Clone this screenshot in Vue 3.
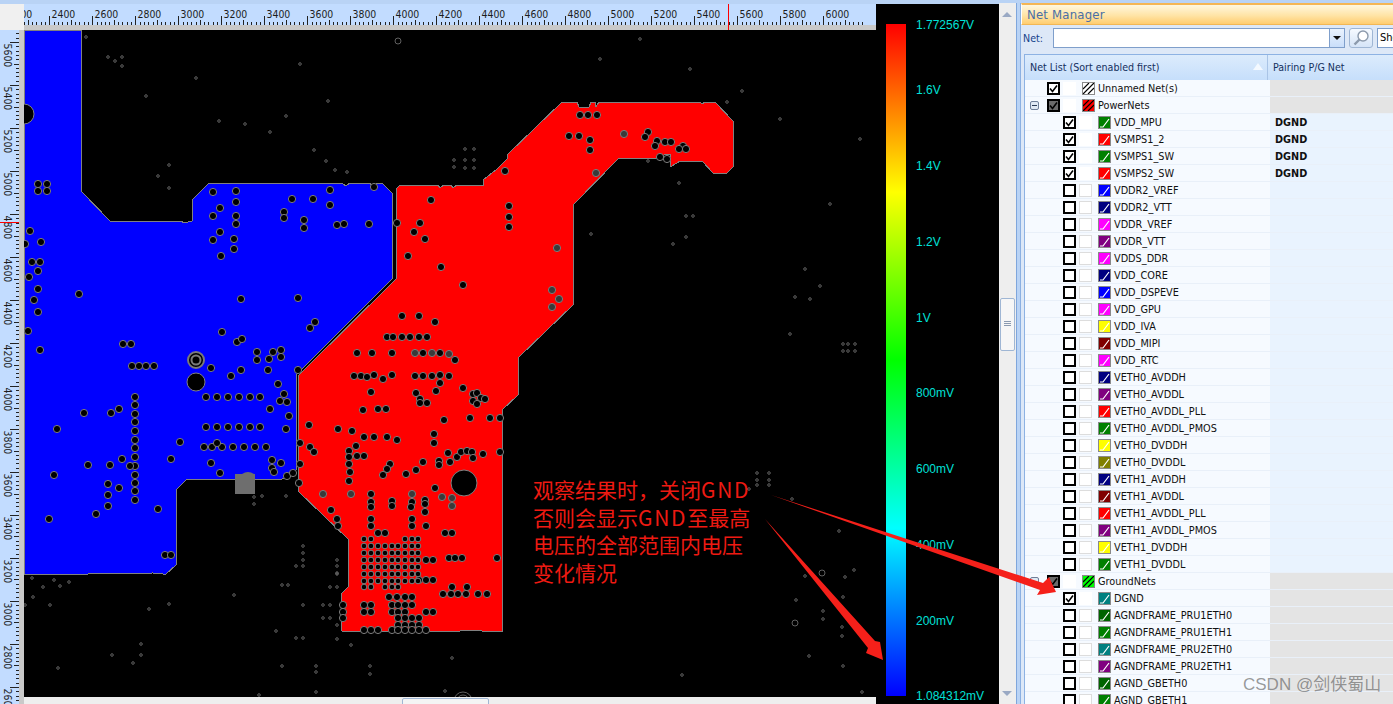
<script setup>
const topTicks = []
for (let i = 0; i < 200; i++) {
  const x = 6.3 + i * 4.3
  if (x > 876) break
  topTicks.push({ x: Math.round(x) + 0.5, h: i % 10 === 0 ? 9 : i % 5 === 0 ? 5 : 3 })
}
const topLabels = []
for (let i = 0; i < 20; i++) topLabels.push({ x: 8.5 + i * 43, text: 2200 + i * 200 })

const leftTicks = []
for (let i = 0; i < 170; i++) {
  const y = 42 - 4.3 * 9 + i * 4.3
  if (y > 704) break
  leftTicks.push({ y: Math.round(y) + 0.5, h: i % 10 === 9 ? 9 : i % 5 === 4 ? 5 : 3 })
}
const leftLabels = []
for (let i = 0; i < 16; i++) leftLabels.push({ y: 43.5 + i * 43, text: 5600 - i * 200 })

const scale = [
  { y: 24, t: '1.772567V' }, { y: 89, t: '1.6V' }, { y: 165, t: '1.4V' }, { y: 241, t: '1.2V' },
  { y: 317, t: '1V' }, { y: 392, t: '800mV' }, { y: 468, t: '600mV' }, { y: 544, t: '400mV' },
  { y: 620, t: '200mV' }, { y: 695, t: '1.084312mV' }
]

const bluePoly = '24,31 81,31 81,192 110,222 181,222 184,224 188,223 192,222 192,201 209,184 236,184 246,184 320,184 342,184 346,187 350,184 370,184 373,188 377,184 382,184 392,194 392,280 297,375 296,473 290,478 282,480 187,480 176,491 176,566 165,576 161,574 157,575 153,574 24,576'
const redPoly = '400,186 438,186 440,189 444,186 451,186 453,189 457,186 483,186 483,181 497,170 507,160 508,155 562,103 577,103 579,108 589,108 591,103 595,103 596,108 599,103 700,103 702,105 705,103 715,103 733,122 733,168 727,174 713,174 702,162 680,162 672,167 670,167 670,155 665,155 660,159 619,159 573,206 573,306 518,359 518,396 502,411 502,632 482,632 480,631 460,632 440,633 341,632 341,595 348,588 348,540 298,492 298,377 396,280 396,190'

const blueHoles = [
  [38,185],[47,185],[38,192],[47,192],[30,232],[41,243],[25,245],[32,263],[40,263],[38,272],[29,278],[38,290],[34,301],[38,313],[28,332],[40,351],[79,295],[123,345],[131,345],[222,333],[237,343],[242,340],[257,353],[257,361],[273,353],[269,360],[281,351],[281,358],[310,329],[315,323],[298,299],[241,300],[221,257],[234,250],[234,240],[213,241],[220,233],[236,225],[236,217],[213,217],[220,209],[236,203],[213,193],[236,192],[292,200],[313,200],[284,213],[284,219],[304,221],[304,229],[369,225],[337,226],[344,225],[330,206],[330,191],[374,188],[132,367],[139,367],[146,367],[154,367],[211,369],[231,377],[241,371],[268,371],[278,385],[284,395],[280,402],[287,403],[270,410],[289,417],[286,430],
  [206,398],[217,398],[228,398],[239,398],[250,398],[260,398],[206,428],[217,428],[228,428],[239,428],[250,428],[260,428],[204,448],[212,448],[222,448],[233,448],[244,448],[255,448],[266,448],[217,444],[180,443],[171,460],[211,464],[220,474],[272,461],[281,464],[272,469],[274,473],
  [135,398],[135,406],[135,415],[135,423],[135,432],[135,441],[135,449],[135,458],[135,467],[130,467],[135,476],[135,484],[135,492],[135,501],[84,414],[111,414],[119,410],[57,430],[122,460],[88,466],[110,466],[54,476],[108,485],[119,489],[108,496],[108,507],[96,515],[49,520],[158,510],[165,556],[171,556],[298,371],[299,484],[287,477],[293,474]
]
const redHoles = [
  [402,317],[419,317],[435,323],[387,338],[393,338],[402,338],[410,338],[419,338],[427,338],[357,354],[372,354],[392,354],[423,354],[440,354],[455,361],[354,377],[361,377],[367,378],[374,376],[383,380],[392,376],[415,377],[423,377],[432,377],[440,376],[449,377],[440,384],[436,392],[463,389],[473,395],[477,394],[473,402],[481,399],[485,400],[477,405],[416,394],[420,400],[420,404],[427,404],[371,393],[363,411],[378,410],[386,410],[444,421],[470,419],[490,419],[500,419],
  [338,430],[352,432],[364,438],[374,438],[387,438],[397,441],[434,435],[434,444],[310,448],[314,453],[356,447],[349,452],[349,458],[349,465],[357,457],[364,457],[350,473],[349,482],[390,465],[387,470],[383,476],[406,475],[416,471],[423,463],[439,462],[439,466],[448,454],[450,463],[457,458],[461,453],[467,452],[472,453],[473,459],[483,455],[435,489],[371,495],[371,503],[371,508],[392,502],[392,507],[412,503],[411,508],[425,501],[425,505],[425,513],[331,511],[337,520],[338,527],[371,520],[371,527],[412,520],[412,527],[426,527],[445,534],[452,534],[378,534],[385,534],
  [426,561],[433,561],[449,559],[455,559],[462,559],[497,559],[419,581],[426,581],[433,581],[452,588],[467,588],[443,595],[451,595],[458,595],[466,595],[478,595],[487,595],[389,598],[397,598],[405,598],[412,598],[364,606],[371,606],[392,606],[398,606],[405,606],[412,606],[364,613],[371,613],[392,613],[398,613],[405,613],[426,613],[433,613],[398,619],[405,619],[412,619],[419,619],[398,626],[405,626],[412,626],[419,626],[364,631],[371,631],[378,631],[392,631],[398,631],[405,631],[412,631],[419,631],[426,631],[343,606],[343,613],[343,619],[309,426],[300,444],[300,465],[500,453],
  [431,201],[509,207],[509,218],[509,228],[420,224],[414,233],[425,240],[408,257],[441,268],[463,286],[505,172],[569,137],[579,137],[590,141],[590,151],[580,116],[588,116],[597,116],[648,133],[645,138],[657,142],[655,147],[665,143],[671,143],[683,147],[679,150],[686,150],[397,224],[667,160],[660,158]
]
const hatched = [[415,354],[432,354],[449,355],[323,495],[351,495],[412,495],[442,498],[452,499],[452,507],[557,249],[552,291],[559,300],[552,308],[596,174],[624,135]]

// via field under the red plane
const gridX = [364, 371, 378, 385, 392, 398, 405, 412, 418]
const gridY = [540, 547, 554, 561, 568, 575, 582, 588]
const gridHoles = []
gridY.forEach((y, r) => gridX.forEach((x, c) => {
  if (r === 0 && c > 1 && c < 6) return
  if (r === 7 && (c === 2 || c > 5)) return
  gridHoles.push([x, y])
}))

const specks = [
  [86,38],[108,58],[115,62],[122,58],[122,67],[196,79],[146,97],[300,65],[219,122],[245,125],[286,117],[328,102],[270,133],[314,151],[326,162],[335,171],[347,173],[169,166],[158,177],[169,189],
  [465,150],[474,150],[454,161],[465,161],[474,161],[454,168],[465,169],[474,169],[742,92],[727,103],[648,162],[679,184],[686,217],[693,217],[591,235],[686,238],[673,245],
  [839,532],[854,571],[845,578],[805,577],[843,598],[796,601],[823,612],[823,620],[842,628],[842,637],[809,657],[843,667],[682,676],[862,693],[792,500],[749,490],
  [757,474],[757,481],[757,486],[769,474],[769,481],[769,486],
  [32,579],[54,581],[69,583],[43,588],[60,587],[33,598],[25,606],[50,606],[169,605],[149,610],[234,596],[141,645],[112,656],[141,656],[133,664],[58,669],[296,567],[303,567],[282,586],[288,586],[330,588],[337,588],[337,574],[337,567],[303,606],[323,606],[330,606],[323,619],[330,619],[337,626],[276,632],[296,639],[303,639],[337,640],[351,646],[452,659],[370,667],[370,675],[316,667],[316,673],[282,667],[445,692],[259,696],[316,693],
  [254,505],[254,498],[262,497],[286,497],[303,547],[303,554],[303,561],[337,561],[337,575],
  [843,345],[848,345],[855,345],[843,352],[848,352],[855,352],[795,298],[790,335],[810,300],[805,270],[820,287],[600,60],[690,70],[780,120],[640,40],[860,140],[830,205]
]
const rings = [[398,42], [822,574], [795,624]]

const dim = (name, color) => ({ name, color, on: false })
const nets = [
  { name: 'Unnamed Net(s)', group: true, hatch: '#fff', on: true, root: true },
  { name: 'PowerNets', group: true, hatch: '#f00', on: true, exp: true },
  { name: 'VDD_MPU', color: '#008000', on: true, pair: 'DGND' },
  { name: 'VSMPS1_2', color: '#f00', on: true, pair: 'DGND' },
  { name: 'VSMPS1_SW', color: '#008000', on: true, pair: 'DGND' },
  { name: 'VSMPS2_SW', color: '#f00', on: true, pair: 'DGND' },
  dim('VDDR2_VREF', '#00f'), dim('VDDR2_VTT', '#000080'), dim('VDDR_VREF', '#f0f'), dim('VDDR_VTT', '#800080'),
  dim('VDDS_DDR', '#f0f'), dim('VDD_CORE', '#000080'), dim('VDD_DSPEVE', '#00f'), dim('VDD_GPU', '#f0f'),
  dim('VDD_IVA', '#ff0'), dim('VDD_MIPI', '#800000'), dim('VDD_RTC', '#f0f'), dim('VETH0_AVDDH', '#000080'),
  dim('VETH0_AVDDL', '#800080'), dim('VETH0_AVDDL_PLL', '#f00'), dim('VETH0_AVDDL_PMOS', '#008000'),
  dim('VETH0_DVDDH', '#ff0'), dim('VETH0_DVDDL', '#808000'), dim('VETH1_AVDDH', '#000080'), dim('VETH1_AVDDL', '#800000'),
  dim('VETH1_AVDDL_PLL', '#f00'), dim('VETH1_AVDDL_PMOS', '#800080'), dim('VETH1_DVDDH', '#ff0'), dim('VETH1_DVDDL', '#008000'),
  { name: 'GroundNets', group: true, hatch: '#0f0', on: true, exp: true, ground: true },
  { name: 'DGND', color: '#008080', on: true, ground: true },
  ...['AGNDFRAME_PRU1ETH0:#006400', 'AGNDFRAME_PRU1ETH1:#008000', 'AGNDFRAME_PRU2ETH0:#008080', 'AGNDFRAME_PRU2ETH1:#800080', 'AGND_GBETH0:#006400', 'AGND_GBETH1:#008000'].map((s) => {
    const [name, color] = s.split(':')
    return { name, color, on: false, ground: true }
  })
]
</script>

<template>
  <div class="app">
    <div class="workspace">
      <div class="view">
        <div class="ruler-top">
          <svg class="ruler-svg" width="876" height="26" viewBox="0 0 876 26">
            <line v-for="t in topTicks" :key="t.x" :x1="t.x" :x2="t.x" y1="21" :y2="21 - t.h" stroke="#222" />
            <text v-for="l in topLabels" :key="l.text" :x="l.x" y="14" class="rl">{{ l.text }}</text>
            <rect x="0" y="0" width="24" height="26" fill="#f0f0f0" />
            <rect x="24" y="21" width="852" height="5" fill="#c9c9c9" />
            <line x1="728.5" x2="728.5" y1="0" y2="26" stroke="#f00" />
          </svg>
        </div>
        <div class="view-body">
          <svg class="ruler-left" width="24" height="674" viewBox="0 30 24 674">
            <rect x="0" y="30" width="19" height="674" fill="#c2dcff" />
            <rect x="19" y="30" width="5" height="674" fill="#c9c9c9" />
            <line v-for="t in leftTicks" :key="t.y" :y1="t.y" :y2="t.y" x1="19" :x2="19 - t.h" stroke="#222" />
            <text v-for="l in leftLabels" :key="l.text" class="rl" :transform="`translate(3.5 ${l.y}) rotate(90)`">{{ l.text }}</text>
            <line x1="0" x2="19" y1="222.5" y2="222.5" stroke="#f00" />
          </svg>
          <div class="canvas-col">
            <svg class="board" width="852" height="667" viewBox="24 31 852 667">
              <polygon :points="bluePoly" fill="#00f" stroke="#808080" shape-rendering="crispEdges" />
              <polygon :points="redPoly" fill="#f00" stroke="#808080" shape-rendering="crispEdges" />
              <circle cx="24" cy="115" r="10" fill="#000" stroke="#808080" />
              <circle cx="196" cy="383" r="9" fill="#000" stroke="#808080" />
              <circle cx="464" cy="484" r="13" fill="#000" stroke="#808080" />
              <circle cx="196" cy="361" r="8" fill="#000" stroke="#7a7a7a" stroke-width="2" />
              <circle cx="196" cy="361" r="4.5" fill="none" stroke="#7a7a7a" stroke-width="2" />
              <path d="M235 495V475H242Q245 473 248 473Q251 473 254 475H255V495Z" fill="#6e6e6e" />
              <circle v-for="(h, i) in blueHoles" :key="'b' + i" :cx="h[0]" :cy="h[1]" r="3.6" class="hole" />
              <circle v-for="(h, i) in redHoles" :key="'r' + i" :cx="h[0]" :cy="h[1]" r="3.6" class="hole" />
              <circle v-for="(h, i) in gridHoles" :key="'g' + i" :cx="h[0]" :cy="h[1]" r="2.8" class="hole" />
              <circle v-for="(h, i) in hatched" :key="'h' + i" :cx="h[0]" :cy="h[1]" r="3.6" class="hole hatched" />
              <circle v-for="(s, i) in specks" :key="'s' + i" :cx="s[0]" :cy="s[1]" r="1.3" class="speck" />
              <circle v-for="(s, i) in rings" :key="'o' + i" :cx="s[0]" :cy="s[1]" r="3" class="speck" />
              <circle cx="463" cy="702" r="9" class="speck" />
              <circle cx="463" cy="702" r="6" class="speck" />
            </svg>
            <div class="hscroll"><div class="hthumb"></div></div>
          </div>
        </div>
      </div>
      <div class="legend">
        <div class="bar"></div>
        <span v-for="s in scale" :key="s.t" class="tick-label" :style="{ top: s.y - 4 + 'px' }">{{ s.t }}</span>
      </div>
      <div class="vscroll">
        <span class="arrow-up"></span>
        <div class="vthumb"></div>
        <span class="arrow-down"></span>
      </div>
      <div class="panel">
        <div class="panel-title">Net Manager</div>
        <div class="toolbar">
          <span class="net-label">Net:</span>
          <div class="combo"><span class="combo-btn"></span></div>
          <button class="find">
            <svg width="18" height="18" viewBox="0 0 18 18">
              <circle cx="11" cy="7" r="5" fill="#fff" stroke="#8c9aac" stroke-width="1.4" />
              <path d="M7.5 10.5L2.5 15.5" stroke="#8c9aac" stroke-width="2.4" />
            </svg>
          </button>
          <div class="show">Sho</div>
        </div>
        <div class="table">
          <div class="thead">
            <div class="th-name">Net List (Sort enabled first)<span class="sort"></span></div>
            <div class="th-pair">Pairing P/G Net</div>
          </div>
          <div v-for="n in nets" :key="n.name" class="row" :class="{ ground: n.ground, groupRow: n.group }">
            <div class="cell-name" :class="{ child: !n.group }">
              <span class="exp"><i v-if="n.exp"></i></span>
              <span class="chk" :class="{ mixed: n.group && !n.root }">
                <svg v-if="n.on" width="9" height="9" viewBox="0 0 9 9"><path d="M1 4.5L3.5 7.5L8 1.5" fill="none" stroke="#000" stroke-width="1.6" /></svg>
              </span>
              <span class="dots" :class="{ blank: n.on }"></span>
              <svg class="swatch" width="13" height="13" viewBox="0 0 13 13" shape-rendering="crispEdges">
                <rect width="13" height="13" :fill="n.color || n.hatch" />
                <template v-if="n.group">
                  <path d="M1 7L7 1M1 12L12 1M6 12L12 6" stroke="#000" stroke-width="1.1" fill="none" shape-rendering="auto" />
                </template>
                <path v-else d="M2 11H5L11 3" stroke="#fff" fill="none" stroke-width="1.2" shape-rendering="auto" />
                <rect x=".5" y=".5" width="12" height="12" fill="none" stroke="#8a8a8a" />
              </svg>
              <span class="label">{{ n.name }}</span>
            </div>
            <div class="cell-pair">{{ n.pair }}</div>
          </div>
        </div>
      </div>
    </div>

    <svg class="arrows" width="1393" height="704" viewBox="0 0 1393 704">
      <polygon points="771,495 1043,583 1049,577 1056,592 1037,595 1040,590" fill="#f5201a" />
      <polygon points="765,519 875,641 880,642 883,660 866,653 868,648" fill="#f5201a" />
    </svg>
    <div class="note">观察结果时，关闭<span class="latin">GND</span><br />否则会显示<span class="latin">GND</span>至最高<br />电压的全部范围内电压<br />变化情况</div>
    <div class="mark">CSDN @剑侠蜀山</div>
  </div>
</template>

<style scoped>
.app {
  position: relative;
  width: 1393px;
  height: 704px;
  overflow: hidden;
  background: #b9d3f5;
  font-family: "DejaVu Sans Condensed", "DejaVu Sans", sans-serif;
}
.workspace { display: flex; height: 704px; padding-top: 4px; box-sizing: border-box; }
.view { width: 876px; flex: none; }
.ruler-top { height: 26px; background: #c2dcff; }
.ruler-svg { display: block; }
.rl { font-size: 10.4px; fill: #1c1c1c; font-family: "DejaVu Sans Condensed", "DejaVu Sans", sans-serif; }
.view-body { display: flex; height: 674px; }
.ruler-left { display: block; flex: none; }
.canvas-col { width: 852px; background: #000; }
.board { display: block; }
.hole { fill: #000; stroke: #7c7c7c; }
.hatched { fill: #3a3a3a; }
.speck { fill: none; stroke: #777; stroke-width: .8; }
.hscroll { height: 7px; background: #eee; position: relative; }
.hthumb {
  position: absolute; left: 378px; top: 1px; width: 85px; height: 8px;
  border: 1px solid #9fb6d4; border-radius: 2px; background: #f4f4f4;
}
.legend { width: 123px; flex: none; background: #000; display: flex; padding: 20px 0 0 10px; box-sizing: border-box; position: relative; }
.bar {
  width: 20px; height: 672px;
  background: linear-gradient(#f00, #ff0, #0f0, #0ff, #00f);
}
.tick-label { position: absolute; left: 40px; font-family: "Liberation Sans", Arial, sans-serif; font-size: 12px; line-height: 14px; margin-top: -6px; color: #00e0d8; white-space: nowrap; }
.vscroll { width: 17px; flex: none; background: #eeeeee; border-right: 1px solid #7fa6dc; position: relative; margin-top: -1px; }
.arrow-up, .arrow-down { position: absolute; left: 3px; width: 0; height: 0; border-left: 5px solid transparent; border-right: 5px solid transparent; }
.arrow-up { top: 9px; border-bottom: 5px solid #9aa9c4; }
.arrow-down { bottom: 8px; border-top: 5px solid #9aa9c4; }
.vthumb { position: absolute; left: 1px; top: 295px; width: 13px; height: 51px; border: 1px solid #9fb6d4; border-radius: 2px; background: #f6f6f6; }
.vthumb::after { content: ""; position: absolute; left: 3px; right: 3px; top: 22px; height: 6px; background: repeating-linear-gradient(#8a9ab0 0 1px, transparent 1px 2px); }
.panel { flex: 1; margin-left: 3px; min-width: 0; margin-top: -1px; background: #dde8f7; border-left: 1px solid #8bb0e2; }
.panel-title {
  height: 22px; line-height: 20px; padding-left: 5px; box-sizing: border-box;
  border-top: 2px solid #f5b654; border-bottom: 1px solid #f2b755; border-left: 1px solid #fff;
  background: linear-gradient(#fff7df, #ffe4a6 55%, #ffcd70);
  font-size: 13px; letter-spacing: .2px; color: #4a6fa5;
}
.toolbar { display: flex; align-items: center; height: 22px; margin-top: 2px; gap: 4px; }
.net-label { width: 26px; padding-left: 2px; font-size: 10.6px; color: #15428b; flex: none; }
.combo {
  width: 292px; height: 20px; box-sizing: border-box; flex: none; display: flex; justify-content: flex-end;
  background: #fff; border: 1px solid #7f9fcb;
}
.combo-btn { width: 14px; background: linear-gradient(#eaf3fe, #c9defa); border-left: 1px solid #7f9fcb; position: relative; }
.combo-btn::after { content: ""; position: absolute; left: 3px; top: 7px; border-left: 4px solid transparent; border-right: 4px solid transparent; border-top: 4px solid #111; }
.find { width: 24px; height: 20px; padding: 0; display: flex; align-items: center; justify-content: center; background: linear-gradient(#f6faff, #d5e4f7); border: 1px solid #9fb6d4; border-radius: 3px; flex: none; }
.show { flex: 1; height: 20px; box-sizing: border-box; border: 1px solid #7f9fcb; border-right: 0; background: #fff; font-size: 11px; line-height: 18px; padding-left: 2px; overflow: hidden; }
.table { margin: 5px 0 0 3px; border-left: 1px solid #8db2e3; border-top: 1px solid #8db2e3; }
.thead { display: flex; height: 25px; background: linear-gradient(#dcebfc, #c6dffb); color: #15305e; font-size: 10.6px; line-height: 24px; }
.th-name { width: 243px; padding-left: 5px; box-sizing: border-box; position: relative; border-right: 1px solid #a9c4e6; }
.th-pair { padding-left: 5px; }
.sort { position: absolute; left: 228px; top: 8px; border-left: 5px solid transparent; border-right: 5px solid transparent; border-bottom: 7px solid #f4f9ff; }
.row { display: flex; height: 17px; font-size: 10.8px; line-height: 17px; color: #111; border-bottom: 1px solid #e9f0f9; box-sizing: border-box; }
.cell-name { width: 245px; flex: none; display: flex; align-items: center; background: #f6faff; box-sizing: border-box; padding-left: 5px; }
.cell-name.child { padding-left: 21px; }
.cell-pair { flex: 1; background: #e9f3fe; padding-left: 5px; font-weight: bold; }
.groupRow .cell-pair, .ground .cell-pair { background: #e4e4e4; }
.exp { width: 17px; flex: none; display: flex; }
.exp i { width: 9px; height: 9px; box-sizing: border-box; border: 1px solid #6f7f99; border-radius: 2px; background: #dfe8f3; position: relative; }
.exp i::after { content: ""; position: absolute; left: 1px; right: 1px; top: 3px; height: 1px; background: #2a3a55; }
.chk { width: 13px; height: 13px; flex: none; box-sizing: border-box; border: 2px solid #000; background: #fff; display: flex; align-items: center; justify-content: center; }
.chk.mixed { background: #6a6a6a; }
.dots { width: 13px; height: 13px; flex: none; margin-left: 3px; box-sizing: border-box; border: 1px dotted #888; background: #fff; outline: 1px solid #ddd; outline-offset: -1px; }
.dots.blank { border: 0; outline: 0; }
.swatch { flex: none; margin-left: 6px; }
.label { margin-left: 3px; white-space: nowrap; }
.arrows { position: absolute; left: 0; top: 0; pointer-events: none; }
.note {
  position: absolute; left: 533px; top: 476px;
  font-family: "Noto Sans CJK SC", "Liberation Sans", sans-serif;
  font-size: 21px; line-height: 27.7px; color: #ee1a12; white-space: nowrap;
}
.latin { letter-spacing: 1.7px; }
.mark {
  position: absolute; left: 1243px; top: 675px;
  font-family: "Liberation Sans", "Noto Sans CJK SC", sans-serif;
  font-size: 17px; line-height: 20px; color: rgba(90, 90, 90, .62); white-space: nowrap;
}
</style>

<style>
html, body { margin: 0; overflow: hidden; }
</style>
